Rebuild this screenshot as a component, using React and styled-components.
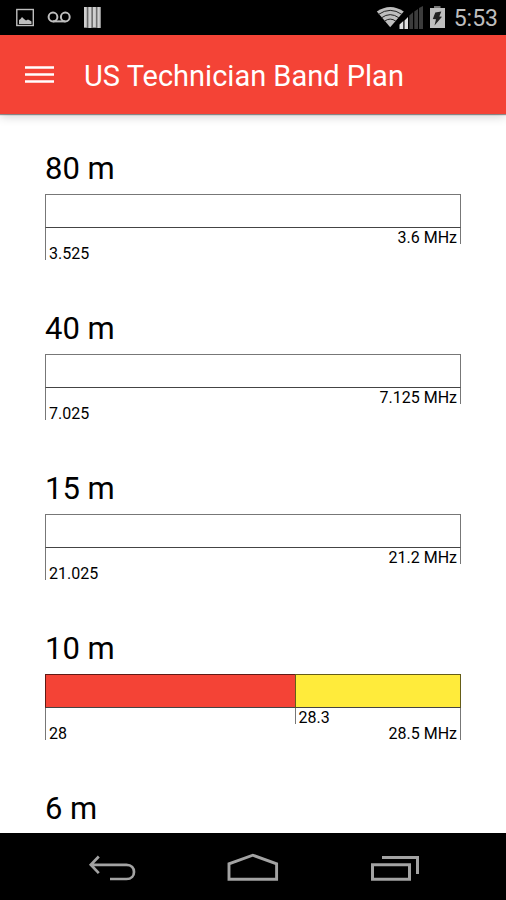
import React from 'react';
import styled, { createGlobalStyle } from 'styled-components';

const color = {
	red: '#f44336',
	yellow: '#ffeb3b',
	line: '#777777',
	icon: '#bebebe',
	nav: '#a3a3a3',
};

const bands = [
	{
		name: '80 m',
		segments: [{ size: 75 }],
		marks: [{ label: '3.525', column: 1, level: 2 }],
		end: { label: '3.6 MHz', level: 1 },
	},
	{
		name: '40 m',
		segments: [{ size: 100 }],
		marks: [{ label: '7.025', column: 1, level: 2 }],
		end: { label: '7.125 MHz', level: 1 },
	},
	{
		name: '15 m',
		segments: [{ size: 175 }],
		marks: [{ label: '21.025', column: 1, level: 2 }],
		end: { label: '21.2 MHz', level: 1 },
	},
	{
		name: '10 m',
		segments: [
			{ size: 300, fill: color.red },
			{ size: 200, fill: color.yellow },
		],
		marks: [
			{ label: '28', column: 1, level: 2 },
			{ label: '28.3', column: 2, level: 1 },
		],
		end: { label: '28.5 MHz', level: 2 },
	},
	{ name: '6 m', segments: [], marks: [] },
];

const StatusIcons = () => (
	<svg width='86' height='23' viewBox='16 6 86 23' aria-hidden='true'>
		<rect x='16.8' y='9.5' width='16.5' height='16' fill='none' stroke={color.icon} strokeWidth='1.4' />
		<path d='M19 24v-4l1.5-1 1.5-2 2 2 2 1.5 2-1 2 1 1.5 1v2.5z' fill={color.icon} />
		<g fill='none' stroke={color.icon} strokeWidth='2'>
			<circle cx='53' cy='17' r='4.4' />
			<circle cx='65.3' cy='17' r='4.4' />
			<path d='M53 21.4h12.3' />
		</g>
		<path d='M84 7h17v21h-17z' fill='#8c8c8c' />
		<path d='M84 7h2.6v20h-2.6zM88.5 7h2.8v21h-2.8zM93 7h2.8v20h-2.8zM97.5 7h2.3v21h-2.3z' fill='#cfcfcf' />
		<path d='M87.6 7v21M92.2 7v21M96.7 7v21' stroke='#555' strokeWidth='0.7' />
	</svg>
);

const SignalIcons = () => (
	<svg width='70' height='27' viewBox='377 4 70 27' aria-hidden='true'>
		<path d='M391.2 27.3L377.8 11.5Q391.2 2.5 404.8 11.5z' fill={color.icon} />
		<g fill='none' stroke='#222' strokeWidth='1'>
			<path d='M379.5 14.4Q391.2 6.3 402.9 14.4' />
			<path d='M382.5 17.8Q391.2 11.5 399.9 17.8' />
			<path d='M385.5 21.2Q391.2 17 396.9 21.2' />
		</g>
		<path d='M400.5 29v-4.5l3.8-3.5v8zM405.5 29v-8.5l3.5-3.5v12z' fill='#e0e0e0' />
		<path d='M410.3 29v-13.5l3.7-3.2v16.7zM415.3 29v-17.5l3.7-2.5v20zM420 29v-21l4-2v23z' fill='#3c3c3c' />
		<path d='M431 8h15v20h-15z' fill={color.icon} />
		<path d='M435 6h6.5v2h-6.5z' fill='#777' />
		<path d='M436.3 12.5l6-1-2 5 2.7.3-7.5 8.7 1.5-6.3-3.2-.3z' fill='#222' />
	</svg>
);

const Band = ({ name, segments, marks, end }) => (
	<BandSection>
		<BandName>{name}</BandName>
		{segments.length > 0 && (
			<Scale $columns={segments.map(({ size }) => `${size}fr`).join(' ')}>
				{segments.map(({ size, fill }, i) => (
					<Segment key={size} $fill={fill} $last={i === segments.length - 1} />
				))}
				{marks.map(({ label, column, level }) => (
					<Mark key={label} $column={column} $level={level}>
						{label}
					</Mark>
				))}
				<EndMark $column={segments.length} $level={end.level}>
					{end.label}
				</EndMark>
			</Scale>
		)}
	</BandSection>
);

const App = () => (
	<>
		<GlobalStyle />
		<Screen>
			<StatusBar>
				<StatusIcons />
				<StatusRight>
					<SignalIcons />
					<Clock>5:53</Clock>
				</StatusRight>
			</StatusBar>
			<Toolbar>
				<MenuButton type='button' aria-label='Open menu'>
					<svg width='29' height='19' viewBox='0 0 29 19'>
						<path d='M0 1.5h29M0 8.5h29M0 15.5h29' stroke='#fff' strokeWidth='2.6' />
					</svg>
				</MenuButton>
				<Title>US Technician Band Plan</Title>
			</Toolbar>
			<Content>
				{bands.map((band) => (
					<Band key={band.name} {...band} />
				))}
			</Content>
			<NavBar>
				<NavButton type='button' aria-label='Back'>
					<svg width='50' height='30' viewBox='87 853 50 30'>
						<path
							d='M91 864.8h35.5c10 0 10 14.2 0 14.2h-16.5M98.8 856.5l-8 8.3 8 8.3'
							fill='none'
							stroke={color.nav}
							strokeWidth='2.7'
						/>
					</svg>
				</NavButton>
				<NavButton type='button' aria-label='Home'>
					<svg width='54' height='30' viewBox='226 853 54 30'>
						<path
							d='M229 879.2v-15.4l23.8-8.6 23.8 8.6v15.4z'
							fill='none'
							stroke={color.nav}
							strokeWidth='2.9'
						/>
					</svg>
				</NavButton>
				<NavButton type='button' aria-label='Recent apps'>
					<svg width='50' height='30' viewBox='369 853 50 30'>
						<path
							d='M372.5 864.8h37v14.5h-37zM382 857.5h35.5v16.5'
							fill='none'
							stroke={color.nav}
							strokeWidth='3'
						/>
					</svg>
				</NavButton>
			</NavBar>
		</Screen>
	</>
);

const GlobalStyle = createGlobalStyle`
	* {
		box-sizing: border-box;
	}
	body {
		margin: 0;
		background: #fff;
		color: #000;
		font-family: Roboto, 'Liberation Sans', sans-serif;
	}
	button {
		display: flex;
		padding: 0;
		border: 0;
		background: none;
		cursor: pointer;
	}
`;

const Screen = styled.div`
	display: flex;
	flex-direction: column;
	height: 100vh;
`;

const StatusBar = styled.div`
	display: flex;
	flex: none;
	align-items: center;
	justify-content: space-between;
	height: 35px;
	padding: 0 8px 0 16px;
	background: #000;
`;

const StatusRight = styled.div`
	display: flex;
	align-items: center;
	gap: 8px;
`;

const Clock = styled.time`
	padding-top: 2px;
	color: ${color.icon};
	font-size: 23px;
	line-height: 33px;
`;

const Toolbar = styled.header`
	display: flex;
	flex: none;
	align-items: center;
	gap: 30px;
	height: 79px;
	padding: 2px 25px 0;
	background: ${color.red};
	box-shadow: 0 1px 1px rgba(0, 0, 0, 0.4), 0 2px 10px rgba(0, 0, 0, 0.2);
	z-index: 1;
`;

const MenuButton = styled.button`
	flex: none;
`;

const Title = styled.h1`
	margin: 0;
	color: #fff;
	font-size: 29px;
	font-weight: 400;
	line-height: 36px;
`;

const Content = styled.main`
	flex: 1;
	min-height: 0;
	padding: 37px 45px 0;
	overflow-y: auto;
	scrollbar-width: none;
`;

const BandSection = styled.section`
	margin-bottom: 51px;
`;

const BandName = styled.h2`
	margin: 0 0 7px;
	font-size: 31px;
	font-weight: 400;
	line-height: 36px;
`;

const Scale = styled.div`
	display: grid;
	grid-template-columns: ${({ $columns }) => $columns};
	grid-template-rows: 34px 32px;
	font-size: 16px;
	line-height: 20px;
`;

const Segment = styled.div`
	background: ${({ $fill }) => $fill || '#fff'};
	border: 1px solid ${({ $fill }) => ($fill ? 'rgba(0, 0, 0, 0.6)' : color.line)};
	border-right-width: ${({ $last }) => ($last ? '1px' : '0')};
	border-bottom-color: #444;
`;

const Mark = styled.span`
	grid-row: 2;
	grid-column: ${({ $column }) => $column};
	justify-self: start;
	height: ${({ $level }) => $level * 16}px;
	padding: ${({ $level }) => ($level - 1) * 16}px 3px 0;
	border-left: 1px solid ${color.line};
`;

const EndMark = styled(Mark)`
	justify-self: end;
	border-left: 0;
	border-right: 1px solid ${color.line};
`;

const NavBar = styled.nav`
	display: flex;
	flex: none;
	align-items: center;
	justify-content: center;
	gap: 85px;
	height: 67px;
	padding: 3px 0 0;
	background: #000;
`;

const NavButton = styled.button`
	justify-content: center;
	width: 56px;
`;

export default App;
